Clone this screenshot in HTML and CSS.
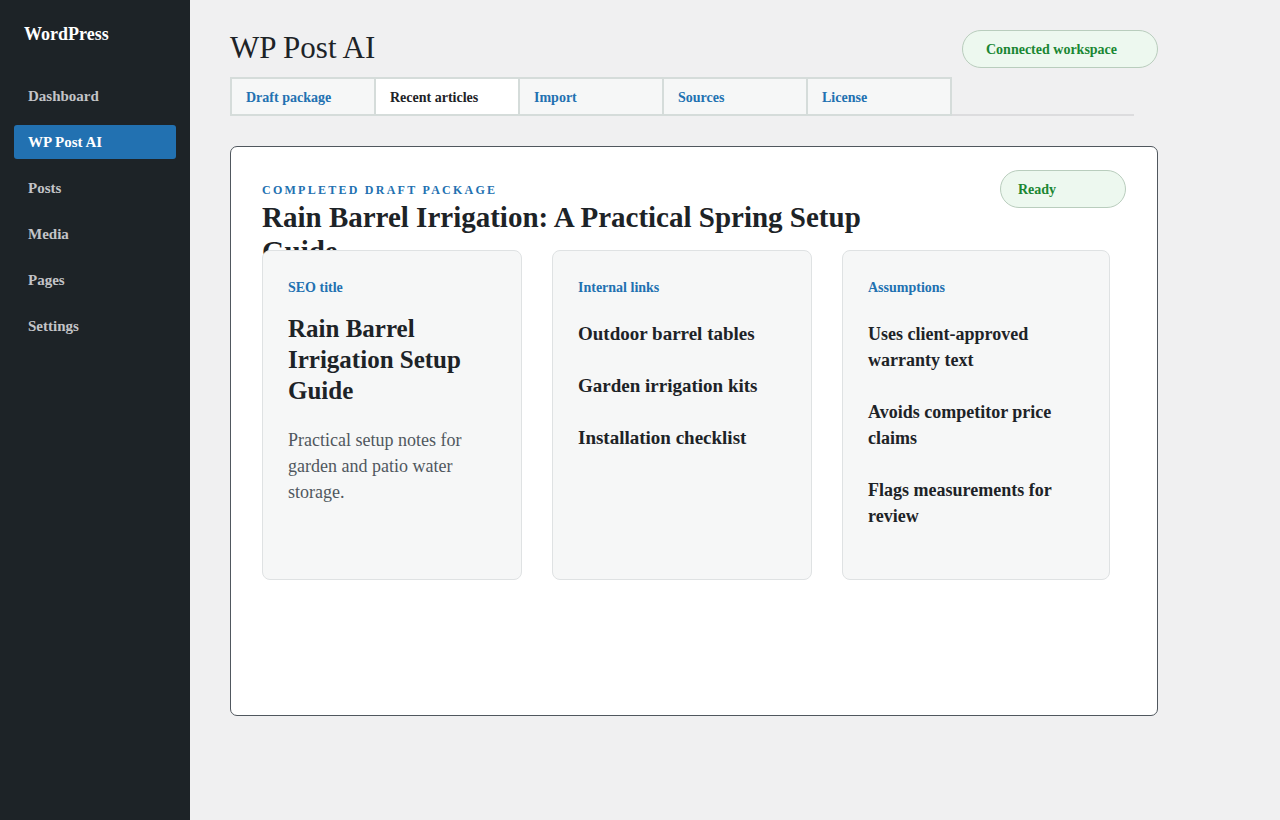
FILE: index.html
```html
<!DOCTYPE html>
<html lang="en">
<head>
<meta charset="utf-8">
<title>WP Post AI</title>
<link rel="stylesheet" href="styles.css">
</head>
<body>
<div class="layout">
  <aside class="sidebar">
    <div class="brand">WordPress</div>
    <nav class="nav">
      <div class="nav-item">Dashboard</div>
      <div class="nav-item active">WP Post AI</div>
      <div class="nav-item">Posts</div>
      <div class="nav-item">Media</div>
      <div class="nav-item">Pages</div>
      <div class="nav-item">Settings</div>
    </nav>
  </aside>
  <main class="main">
    <header class="page-head">
      <h1 class="page-title">WP Post AI</h1>
      <span class="pill pill-workspace">Connected workspace</span>
    </header>
    <div class="tabs">
      <div class="tab">Draft package</div>
      <div class="tab active">Recent articles</div>
      <div class="tab">Import</div>
      <div class="tab">Sources</div>
      <div class="tab">License</div>
    </div>
    <section class="panel">
      <div class="panel-head">
        <div class="panel-titles">
          <div class="eyebrow">COMPLETED DRAFT PACKAGE</div>
          <h2 class="panel-title">Rain Barrel Irrigation: A Practical Spring Setup Guide</h2>
        </div>
        <span class="pill pill-ready">Ready</span>
      </div>
      <div class="cards">
        <div class="card">
          <div class="card-label">SEO title</div>
          <div class="seo-title">Rain Barrel Irrigation Setup Guide</div>
          <p class="seo-desc">Practical setup notes for garden and patio water storage.</p>
        </div>
        <div class="card card-links">
          <div class="card-label">Internal links</div>
          <div class="item">Outdoor barrel tables</div>
          <div class="item">Garden irrigation kits</div>
          <div class="item">Installation checklist</div>
        </div>
        <div class="card">
          <div class="card-label">Assumptions</div>
          <div class="item">Uses client-approved warranty text</div>
          <div class="item">Avoids competitor price claims</div>
          <div class="item">Flags measurements for review</div>
        </div>
      </div>
    </section>
  </main>
</div>
</body>
</html>
```
FILE: styles.css
```css
* { box-sizing: border-box; }
html, body { margin: 0; padding: 0; }
body {
  font-family: "Liberation Serif", "Times New Roman", serif;
  background: #f0f0f1;
  color: #1d2327;
}
.layout {
  display: flex;
  min-height: 820px;
}
.sidebar {
  width: 190px;
  flex: none;
  background: #1d2327;
  padding: 24px 14px;
}
.brand {
  color: #ffffff;
  font-weight: bold;
  font-size: 18px;
  line-height: 20px;
  padding-left: 10px;
  margin-bottom: 35px;
}
.nav {
  display: flex;
  flex-direction: column;
  gap: 12px;
}
.nav-item {
  height: 34px;
  line-height: 34px;
  padding: 0 14px;
  font-size: 15px;
  font-weight: bold;
  color: #c3c4c7;
  border-radius: 3px;
}
.nav-item.active {
  background: #2271b1;
  color: #ffffff;
}
.main {
  flex: 1;
  padding: 28px 0 0 40px;
}
.page-head {
  width: 928px;
  height: 40px;
  display: flex;
  justify-content: space-between;
  align-items: flex-start;
}
.page-title {
  margin: 0;
  font-size: 31px;
  font-weight: normal;
  line-height: 40px;
  color: #1d2327;
}
.pill {
  display: inline-block;
  height: 38px;
  line-height: 36px;
  padding-top: 1px;
  border: 1px solid #b9cdbd;
  background: #edf8ef;
  color: #1a8733;
  font-weight: bold;
  font-size: 14px;
  border-radius: 19px;
}
.pill-workspace {
  margin-top: 2px;
  width: 196px;
  padding-left: 23px;
}
.pill-ready {
  width: 126px;
  padding-left: 17px;
}
.tabs {
  margin-top: 9px;
  width: 904px;
  display: flex;
  border-bottom: 2px solid #dcdcde;
}
.tab {
  width: 146px;
  height: 39px;
  margin-bottom: -2px;
  border: 2px solid #d5dcda;
  background: #f6f7f7;
  padding-left: 14px;
  padding-top: 1px;
  line-height: 36px;
  font-size: 14px;
  font-weight: bold;
  color: #2271b1;
}
.tab + .tab { margin-left: -2px; }
.tab.active {
  background: #ffffff;
  color: #1d2327;
}
.panel {
  margin-top: 30px;
  width: 928px;
  height: 570px;
  background: #ffffff;
  border: 1px solid #50575e;
  border-radius: 7px;
  padding: 23px 31px 31px;
}
.panel-head {
  height: 80px;
  display: flex;
  justify-content: space-between;
  align-items: flex-start;
}
.panel-titles {
  padding-top: 12px;
}
.eyebrow {
  font-size: 12px;
  font-weight: bold;
  letter-spacing: 2.25px;
  line-height: 16px;
  color: #2271b1;
}
.panel-title {
  margin: 2px 0 0;
  max-width: 620px;
  font-size: 29px;
  line-height: 34px;
  font-weight: bold;
  color: #1d2327;
}
.cards {
  position: relative;
  display: grid;
  grid-template-columns: 260px 260px 268px;
  gap: 30px;
}
.card {
  height: 330px;
  background: #f6f7f7;
  border: 1px solid #dfe2e3;
  border-radius: 8px;
  padding: 27px 25px 25px;
}
.card-label {
  font-size: 14px;
  line-height: 19px;
  font-weight: bold;
  color: #2271b1;
  margin-bottom: 24px;
}
.seo-title {
  margin-top: -8px;
  font-size: 25px;
  line-height: 31px;
  font-weight: bold;
  color: #1d2327;
}
.seo-desc {
  margin: 21px 0 0;
  font-size: 18px;
  line-height: 26px;
  color: #50575e;
}
.item {
  font-size: 18px;
  line-height: 26px;
  font-weight: bold;
  color: #1d2327;
  margin-bottom: 26px;
}
.card-links .item {
  font-size: 19px;
}
```
